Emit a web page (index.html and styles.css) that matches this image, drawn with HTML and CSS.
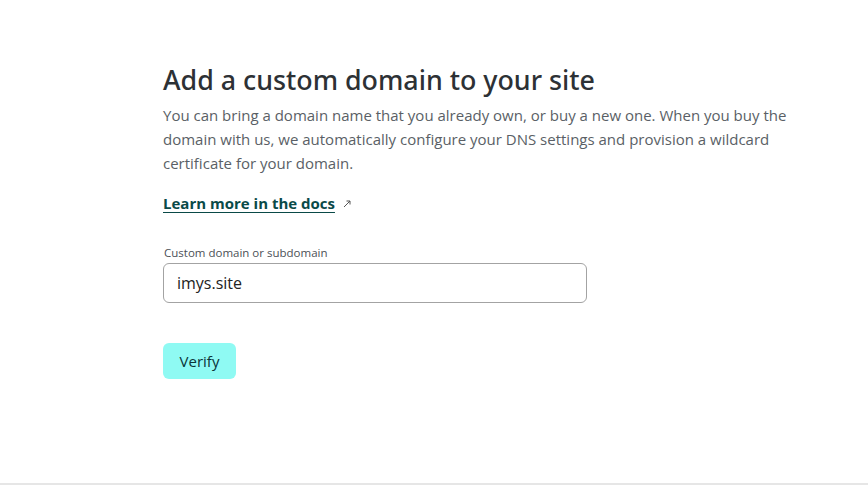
FILE: index.html
```html
<!DOCTYPE html>
<html lang="en">
<head>
<meta charset="utf-8">
<title>Add a custom domain</title>
<link rel="stylesheet" href="styles.css">
</head>
<body>
<main class="page">
  <section class="card">
    <h1 class="title">Add a custom domain to your site</h1>
    <p class="lead">You can bring a domain name that you already own, or buy a new one. When you buy the domain with us, we automatically configure your DNS settings and provision a wildcard certificate for your domain.</p>
    <p class="docs"><a class="docs-link" href="#">Learn more in the docs</a><svg class="ext" width="10" height="10" viewBox="0 0 10 10"><path d="M2 8 L8 2 M4.5 2 H8 V5.5" fill="none" stroke="#555" stroke-width="1"/></svg></p>
    <form class="form">
      <label class="field-label" for="domain">Custom domain or subdomain</label>
      <input class="field" id="domain" type="text" value="imys.site">
      <div class="actions"><button class="btn" type="button">Verify</button></div>
    </form>
  </section>
</main>
</body>
</html>
```
FILE: styles.css
```css
html, body {
  margin: 0;
  padding: 0;
  background: #fff;
}
body {
  font-family: "Open Sans", "Noto Sans", sans-serif;
  color: #2e3338;
}
.page {
  box-sizing: border-box;
  height: 485px;
  border-bottom: 2px solid #e6e6e6;
}
.card {
  margin-left: 163px;
  width: 650px;
  padding-top: 62px;
}
.title {
  margin: 0 0 5px;
  font-family: "Noto Sans", "Open Sans", sans-serif;
  font-size: 26.8px;
  font-weight: 500;
  line-height: 36px;
  color: #2d3135;
}
.lead {
  margin: 0;
  font-size: 15px;
  line-height: 24px;
  color: #5a5f66;
}
.docs {
  margin: 16px 0 0;
  font-size: 15px;
  line-height: 24px;
  display: flex;
  align-items: center;
  gap: 7px;
}
.docs-link {
  color: #0a4a48;
  font-weight: 700;
  text-decoration: underline;
  text-underline-offset: 3px;
}
.ext { margin-top: 1px; }
.form {
  margin-top: 31px;
  display: flex;
  flex-direction: column;
  align-items: flex-start;
}
.field-label {
  font-size: 11.5px;
  line-height: 14px;
  color: #4b5056;
  margin-left: 1px;
  margin-bottom: 3px;
}
.field {
  width: 424px;
  height: 40px;
  box-sizing: border-box;
  border: 1px solid #a3a3a3;
  border-radius: 6px;
  padding: 0 12px 0 13px;
  font-family: inherit;
  font-size: 16px;
  color: #222;
  outline: none;
}
.actions {
  margin-top: 40px;
}
.btn {
  width: 73px;
  height: 36px;
  border: 0;
  border-radius: 6px;
  background: #8ffaf3;
  color: #0b3538;
  font-family: inherit;
  font-size: 15px;
  font-weight: 500;
  padding: 0;
  cursor: pointer;
}
```
